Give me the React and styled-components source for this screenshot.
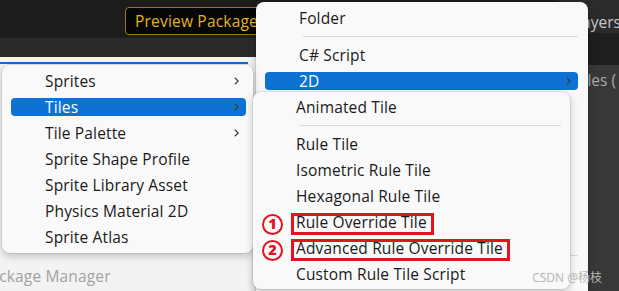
import React from "react";
import styled, { createGlobalStyle } from "styled-components";

const GlobalStyle = createGlobalStyle`
  html, body {
    margin: 0;
    padding: 0;
    background: #1c1c1c;
  }
  body {
    font-family: "Open Sans", "Noto Sans CJK SC", sans-serif;
  }
`;

const Page = styled.div`
  position: relative;
  width: 619px;
  height: 291px;
  overflow: hidden;
  display: grid;
  grid-template-columns: 1fr 60px;
`;

/* editor background */

const EditorColumn = styled.div`
  display: flex;
  flex-direction: column;
  min-width: 0;
`;

const Toolbar = styled.div`
  height: 38px;
  box-sizing: border-box;
  padding: 7px 0 0 125px;
  background: #1c1c1c;
  display: flex;
  align-items: flex-start;
`;

const PreviewButton = styled.div`
  height: 28px;
  box-sizing: border-box;
  padding: 0 9px;
  border: 1px solid #9a7614;
  border-radius: 4px;
  background: #060606;
  color: #e3b41f;
  font-size: 15.5px;
  letter-spacing: 0.2px;
  display: flex;
  align-items: center;
  white-space: nowrap;
`;

const TabStrip = styled.div`
  height: 19px;
  background: #2a2a2a;
`;

const ProjectArea = styled.div`
  flex: 1;
  background: #f3f3f3;
  display: flex;
  flex-direction: column;
  justify-content: space-between;
  padding-top: 5px;
`;

const ParentHighlight = styled.div`
  width: 248px;
  height: 2px;
  background: #0b6fd2;
`;

const WindowTitle = styled.div`
  margin: 0 0 5px -19px;
  color: #a2a2a2;
  font-size: 15.5px;
  letter-spacing: 0.15px;
  line-height: 20px;
  white-space: nowrap;
`;

const SideColumn = styled.div`
  display: flex;
  flex-direction: column;
  background: #383838;
  font-size: 15.5px;
  line-height: 20px;
  white-space: nowrap;
  overflow: hidden;
`;

const SideTab = styled.div`
  height: 33px;
  box-sizing: border-box;
  padding: 12px 0 0 15px;
  background: #2b2b2b;
  color: #c8c8c8;
`;

const SideStrip = styled.div`
  height: 32px;
  background: #1e1e1e;
`;

const SidePanel = styled.div`
  padding: 5px 0 0 16px;
  color: #a8a8a8;
`;

/* context menus */

const Menu = styled.div`
  position: absolute;
  box-sizing: border-box;
  display: flex;
  flex-direction: column;
  background: #f9f9f9;
  border-radius: 8px;
  box-shadow: 0 0 0 1px rgba(0, 0, 0, 0.07), 0 3px 8px rgba(0, 0, 0, 0.22);
  --gutter-l: 9px;
`;

const MainMenu = styled(Menu)`
  left: 256px;
  top: 2px;
  width: 332px;
  height: 310px;
  padding-top: 3px;
  --gutter-r: 10px;
  z-index: 1;
`;

const SpriteMenu = styled(Menu)`
  left: 2px;
  top: 65px;
  width: 251px;
  padding: 3px 0;
  --gutter-r: 7px;
  z-index: 2;
`;

const TileMenu = styled(Menu)`
  left: 253px;
  top: 92px;
  width: 317px;
  padding: 2px 0;
  --gutter-r: 9px;
  z-index: 3;
`;

const Item = styled.div`
  position: relative;
  height: 18px;
  margin: 4px var(--gutter-r) 4px var(--gutter-l);
  padding: 0 7px 0 34px;
  display: flex;
  align-items: center;
  justify-content: space-between;
  border-radius: 4px;
  font-size: 15.5px;
  letter-spacing: 0.15px;
  line-height: 18px;
  white-space: nowrap;
  color: ${(p) => (p.$active ? "#ffffff" : "#1a1a1a")};
  background: ${(p) => (p.$active ? "#0d72d4" : "transparent")};
`;

const Separator = styled.div`
  height: 1px;
  margin: 5px var(--gutter-r) 5px 47px;
  background: #d9d9d9;
`;

const Label = styled.span`
  position: relative;
  display: inline-block;
  line-height: 18px;
`;

/* red annotations */

const Callout = styled.span`
  position: absolute;
  left: -5px;
  right: -7px;
  top: 0;
  bottom: -4px;
  border: 3px solid #e3141d;
`;

const Badge = styled.span`
  position: absolute;
  left: 0;
  top: 1px;
  width: 21px;
  height: 21px;
  box-sizing: border-box;
  border: 2.5px solid #e3141d;
  border-radius: 50%;
  color: #e3141d;
  font-size: 14.5px;
  font-weight: 800;
  letter-spacing: 0;
  line-height: 16px;
  text-align: center;
`;

const Watermark = styled.div`
  position: absolute;
  right: 17px;
  top: 268px;
  z-index: 4;
  font-size: 12px;
  color: #b4b4b4;
  white-space: nowrap;
`;

const Chevron = () => (
  <svg width="5" height="8" viewBox="0 0 5 8">
    <path d="M0.8 0.8 L4.2 4 L0.8 7.2" fill="none" stroke="#3a3a3a" strokeWidth="1.2" />
  </svg>
);

const MenuItem = ({ label, active, sub, mark }) => (
  <Item $active={active}>
    {mark && <Badge>{mark}</Badge>}
    <Label>
      {label}
      {mark && <Callout />}
    </Label>
    {sub && <Chevron />}
  </Item>
);

const spriteItems = [
  { label: "Sprites", sub: true },
  { label: "Tiles", sub: true, active: true },
  { label: "Tile Palette", sub: true },
  { label: "Sprite Shape Profile" },
  { label: "Sprite Library Asset" },
  { label: "Physics Material 2D" },
  { label: "Sprite Atlas" },
];

const createItems = [
  "Visual Scripting",
  "Shader",
  "Testing",
  "Playables",
  "Assembly Definition",
  "Assembly Definition Reference",
];

const tileItems = [
  { label: "Rule Tile" },
  { label: "Isometric Rule Tile" },
  { label: "Hexagonal Rule Tile" },
  { label: "Rule Override Tile", mark: "1" },
  { label: "Advanced Rule Override Tile", mark: "2" },
  { label: "Custom Rule Tile Script" },
];

export default function App() {
  return (
    <Page>
      <GlobalStyle />

      <EditorColumn>
        <Toolbar>
          <PreviewButton>Preview Packages in Use</PreviewButton>
        </Toolbar>
        <TabStrip />
        <ProjectArea>
          <ParentHighlight />
          <WindowTitle>Package Manager</WindowTitle>
        </ProjectArea>
      </EditorColumn>

      <SideColumn>
        <SideTab>Layers</SideTab>
        <SideStrip />
        <SidePanel>Tiles (</SidePanel>
      </SideColumn>

      <MainMenu>
        <MenuItem label="Folder" />
        <Separator />
        <MenuItem label="C# Script" />
        <MenuItem label="2D" sub active />
        {createItems.map((label) => (
          <MenuItem key={label} label={label} />
        ))}
        <Separator />
        <MenuItem label="Scene" />
      </MainMenu>

      <SpriteMenu>
        {spriteItems.map((item) => (
          <MenuItem key={item.label} {...item} />
        ))}
      </SpriteMenu>

      <TileMenu>
        <MenuItem label="Animated Tile" />
        <Separator />
        {tileItems.map((item) => (
          <MenuItem key={item.label} {...item} />
        ))}
      </TileMenu>

      <Watermark>CSDN @杨枝</Watermark>
    </Page>
  );
}
